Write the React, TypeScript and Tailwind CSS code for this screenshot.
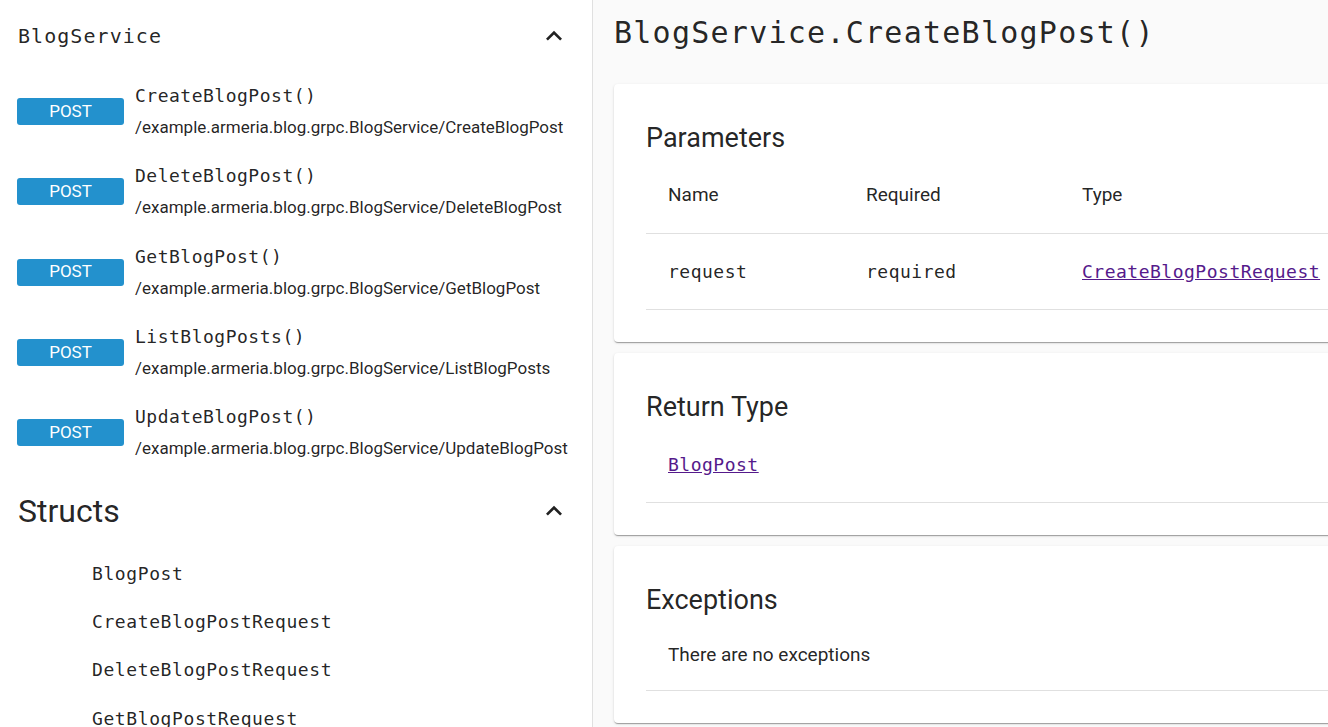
import React from "react";

const mono = "font-['DejaVu_Sans_Mono',monospace]";
const sans = "font-['Roboto',sans-serif]";

function Chevron() {
  return (
    <svg width="32" height="32" viewBox="0 0 24 24" className="shrink-0">
      <path d="M12 8l-6 6 1.41 1.41L12 10.83l4.59 4.58L18 14z" fill="rgba(0,0,0,0.87)" />
    </svg>
  );
}

const methods = ["CreateBlogPost", "DeleteBlogPost", "GetBlogPost", "ListBlogPosts", "UpdateBlogPost"];
const structs = ["BlogPost", "CreateBlogPostRequest", "DeleteBlogPostRequest", "GetBlogPostRequest"];

const cardShadow =
  "shadow-[0px_2px_1px_-1px_rgba(0,0,0,0.2),0px_1px_1px_0px_rgba(0,0,0,0.14),0px_1px_3px_0px_rgba(0,0,0,0.12)]";

export default function App() {
  return (
    <div className={`w-[1328px] h-[727px] overflow-hidden flex bg-[#fafafa] text-[rgba(0,0,0,0.87)] ${sans}`}>
      {/* Sidebar */}
      <div className="w-[593px] shrink-0 bg-white border-r border-[#e0e0e0] overflow-hidden">
        <div className="h-[72px] flex items-center justify-between pl-[18px] pr-[22px]">
          <span className={`${mono} text-[20px] tracking-[1.05px]`}>BlogService</span>
          <Chevron />
        </div>
        <div className="pt-[10px]">
          {methods.map((m) => (
            <div key={m} className="h-[80.25px] flex items-start pl-[17px]">
              <div className="mt-[16px] w-[107px] h-[27px] rounded-[3px] bg-[#2391cd] text-white text-[17px] flex items-center justify-center shrink-0">
                POST
              </div>
              <div className="ml-[11px] flex flex-col">
                <div className={`${mono} text-[18px] tracking-[0.5px] h-[28px] leading-[28px]`}>{m}()</div>
                <div className="mt-[5px] h-[24px] leading-[24px] text-[17px]">
                  /example.armeria.blog.grpc.BlogService/{m}
                </div>
              </div>
            </div>
          ))}
        </div>
        <div className="h-[56px] flex items-center justify-between pl-[18px] pr-[22px]">
          <span className="text-[32px]">Structs</span>
          <Chevron />
        </div>
        <div className="pt-[10px]">
          {structs.map((s) => (
            <div key={s} className={`h-[48.3px] flex items-center pl-[92px] ${mono} text-[18px] tracking-[0.6px]`}>
              {s}
            </div>
          ))}
        </div>
      </div>

      {/* Main */}
      <div className="flex-1 pl-[21px]">
        <div className={`h-[64px] flex items-center ${mono} text-[30px] tracking-[1.25px]`}>
          BlogService.CreateBlogPost()
        </div>

        <div className={`mt-[20px] w-[900px] bg-white rounded-[4px] ${cardShadow} pt-[33px] pb-[32px] px-[32px]`}>
          <div className="h-[41px] pt-[2px] flex items-center text-[27px]">Parameters</div>
          <div className="flex h-[76px] items-center border-b border-[#e0e0e0] text-[19px]">
            <div className="w-[198px] pl-[22px]">Name</div>
            <div className="w-[216px] pl-[22px]">Required</div>
            <div className="pl-[22px]">Type</div>
          </div>
          <div className={`flex h-[76px] items-center border-b border-[#e0e0e0] ${mono} text-[18px] tracking-[0.5px]`}>
            <div className="w-[198px] pl-[22px]">request</div>
            <div className="w-[216px] pl-[22px]">required</div>
            <div className="pl-[22px]">
              <a className="text-[#551a8b] underline">CreateBlogPostRequest</a>
            </div>
          </div>
        </div>

        <div className={`mt-[11px] w-[900px] bg-white rounded-[4px] ${cardShadow} pt-[33px] pb-[32px] px-[32px]`}>
          <div className="h-[41px] pt-[2px] flex items-center text-[27px]">Return Type</div>
          <div className={`flex h-[76px] items-center border-b border-[#e0e0e0] pl-[22px] ${mono} text-[18px] tracking-[0.5px]`}>
            <a className="text-[#551a8b] underline">BlogPost</a>
          </div>
        </div>

        <div className={`mt-[11px] w-[900px] bg-white rounded-[4px] ${cardShadow} pt-[33px] pb-[32px] px-[32px]`}>
          <div className="h-[41px] pt-[2px] flex items-center text-[27px]">Exceptions</div>
          <div className="flex h-[71px] items-center border-b border-[#e0e0e0] pl-[22px] text-[19px]">
            There are no exceptions
          </div>
        </div>
      </div>
    </div>
  );
}
